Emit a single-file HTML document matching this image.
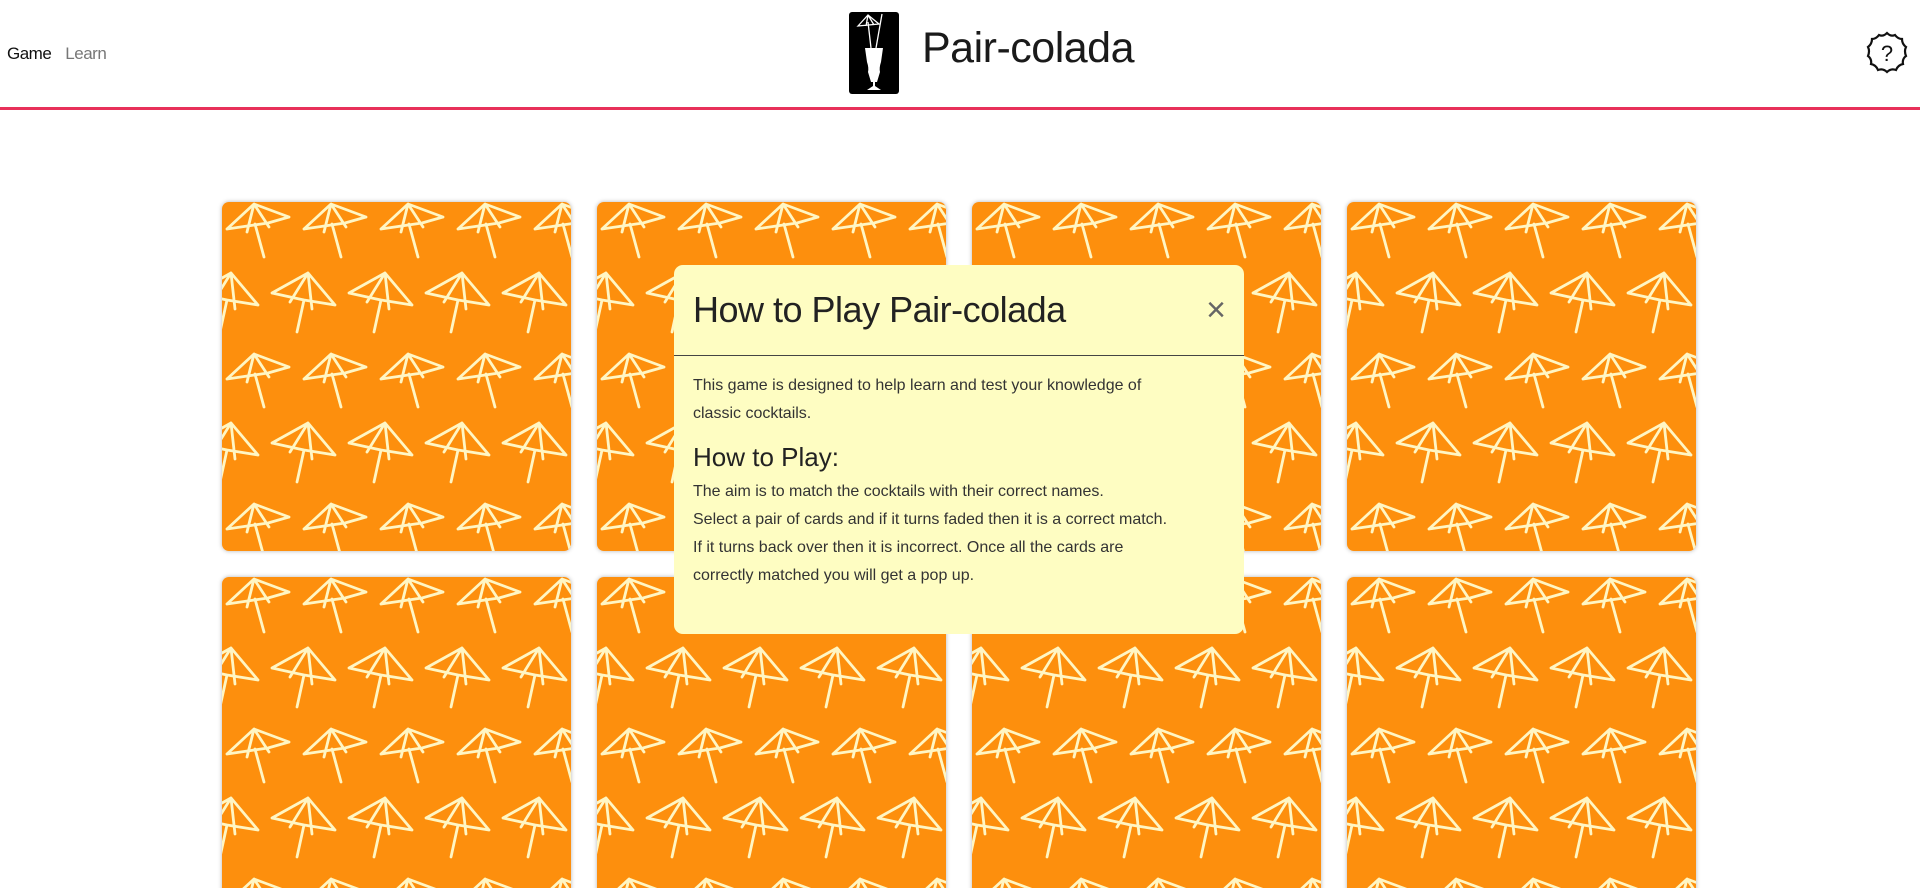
<!DOCTYPE html>
<html><head><meta charset="utf-8"><style>
*{margin:0;padding:0;box-sizing:border-box}
body{width:1920px;height:888px;overflow:hidden;background:#fff;font-family:"Liberation Sans",sans-serif;color:#111;position:relative}
.hdr{position:absolute;left:0;top:0;width:1920px;height:110px;border-bottom:3px solid #e8315a}
.nav{position:absolute;left:7px;top:44px;font-size:17px;letter-spacing:-0.5px}
.nav span{margin-right:14px}
.logo{position:absolute;left:849px;top:12px;width:50px;height:82px;background:#000;border-radius:3px}
.title{position:absolute;left:922px;top:24px;font-size:43px;letter-spacing:-0.5px;font-weight:normal;color:#1a1a1a}
.help{position:absolute;left:1864px;top:30px}
.modal{position:absolute;left:674px;top:265px;width:570px;height:369px;background:#fefdc2;border-radius:9px}
.mh{height:91px;border-bottom:1.5px solid #444;position:relative}
.mh h1{position:absolute;left:19px;top:24px;font-size:36px;font-weight:normal;letter-spacing:-0.5px;color:#222}
.x{position:absolute;right:18px;top:26px;font-size:34px;color:#666;font-weight:normal}
.mb{padding:16px 19px;font-size:16px;line-height:28px;color:#333;white-space:nowrap}
.mb h2{font-size:26px;font-weight:normal;margin:12px 0 4px;line-height:34px;color:#222}
</style></head><body>
<svg width="0" height="0" style="position:absolute"><defs>
<pattern id="u" width="77" height="150" patternUnits="userSpaceOnUse" x="0" y="0">
<g stroke="#fff6c4" stroke-width="2.8" fill="none" stroke-linecap="round" stroke-linejoin="round">
<g id="a" transform="translate(32,2)">
<path d="M-27,25 L0,0 L35,13 M-27,25 L14,19 L35,13 M0,0 L-7,28 M0,0 L15,23 M1,20 L10,53"/>
</g>
<g transform="translate(9,71)">
<path id="b" d="M-36,20 L0,0 L27,32 M-36,20 L-4,27 L27,32 M0,0 L-18,29 M0,0 L4,36 M-4,27 L-11,59"/>
<path transform="translate(77,0)" d="M-36,20 L0,0 L27,32 M-36,20 L-4,27 L27,32 M0,0 L-18,29 M0,0 L4,36 M-4,27 L-11,59"/>
</g>
<g transform="translate(32,152)"><path d="M-27,25 L0,0 L35,13 M-27,25 L14,19 L35,13 M0,0 L-7,28 M0,0 L15,23"/></g>
<g transform="translate(32,-148)"><path d="M1,20 L10,53"/></g>
</g></pattern></defs></svg>
<div class="hdr">
<div class="nav"><span style="color:#111">Game</span><span style="color:#777">Learn</span></div>
<div class="logo"><svg width="50" height="82" viewBox="0 0 50 82">
<g stroke="#fff" stroke-width="1.3" fill="none"><path d="M9,14 L19,3 L30,12 Z M19,3 L17,14 M19,3 L25,13 M19,10 L22,36 M33,2 L27,36"/></g>
<path d="M16,36 L34,36 L32,50 Q30,56 31,60 L28,70 L26,70 L26,74 L32,78 L18,78 L24,74 L24,70 L22,70 L19,60 Q20,56 18,50 Z" fill="#fff"/></svg></div>
<div class="title">Pair-colada</div>
<div class="help"><svg width="46" height="46" viewBox="0 0 46 46"><path d="M23,3 Q27,7 31,5 Q34,9 38,9 Q38,14 42,17 Q40,21 42,26 Q38,29 39,34 Q34,35 32,40 Q27,38 23,42 Q19,38 14,40 Q12,35 7,34 Q8,29 4,26 Q6,21 4,17 Q8,14 8,9 Q12,9 15,5 Q19,7 23,3 Z" fill="none" stroke="#111" stroke-width="2.2"/><text x="23" y="31" font-size="22" text-anchor="middle" fill="#111" font-family="Liberation Sans">?</text></svg></div>
</div>
<svg width="1920" height="888" style="position:absolute;left:0;top:0">
<defs><filter id="s" x="-5%" y="-5%" width="110%" height="110%"><feDropShadow dx="0" dy="0" stdDeviation="2" flood-opacity="0.3"/></filter></defs>
<g>
<g transform="translate(222,202)"><rect width="349" height="349" rx="7" fill="#fd8f11" filter="url(#s)"/><rect width="349" height="349" rx="7" fill="url(#u)"/></g>
<g transform="translate(597,202)"><rect width="349" height="349" rx="7" fill="#fd8f11" filter="url(#s)"/><rect width="349" height="349" rx="7" fill="url(#u)"/></g>
<g transform="translate(972,202)"><rect width="349" height="349" rx="7" fill="#fd8f11" filter="url(#s)"/><rect width="349" height="349" rx="7" fill="url(#u)"/></g>
<g transform="translate(1347,202)"><rect width="349" height="349" rx="7" fill="#fd8f11" filter="url(#s)"/><rect width="349" height="349" rx="7" fill="url(#u)"/></g>
<g transform="translate(222,577)"><rect width="349" height="349" rx="7" fill="#fd8f11" filter="url(#s)"/><rect width="349" height="349" rx="7" fill="url(#u)"/></g>
<g transform="translate(597,577)"><rect width="349" height="349" rx="7" fill="#fd8f11" filter="url(#s)"/><rect width="349" height="349" rx="7" fill="url(#u)"/></g>
<g transform="translate(972,577)"><rect width="349" height="349" rx="7" fill="#fd8f11" filter="url(#s)"/><rect width="349" height="349" rx="7" fill="url(#u)"/></g>
<g transform="translate(1347,577)"><rect width="349" height="349" rx="7" fill="#fd8f11" filter="url(#s)"/><rect width="349" height="349" rx="7" fill="url(#u)"/></g>
</g></svg>
<div class="modal">
<div class="mh"><h1>How to Play Pair-colada</h1><div class="x">×</div></div>
<div class="mb">
<p>This game is designed to help learn and test your knowledge of<br>classic cocktails.</p>
<h2>How to Play:</h2>
<p>The aim is to match the cocktails with their correct names.<br>Select a pair of cards and if it turns faded then it is a correct match.<br>If it turns back over then it is incorrect. Once all the cards are<br>correctly matched you will get a pop up.</p>
</div></div>
</body></html>
